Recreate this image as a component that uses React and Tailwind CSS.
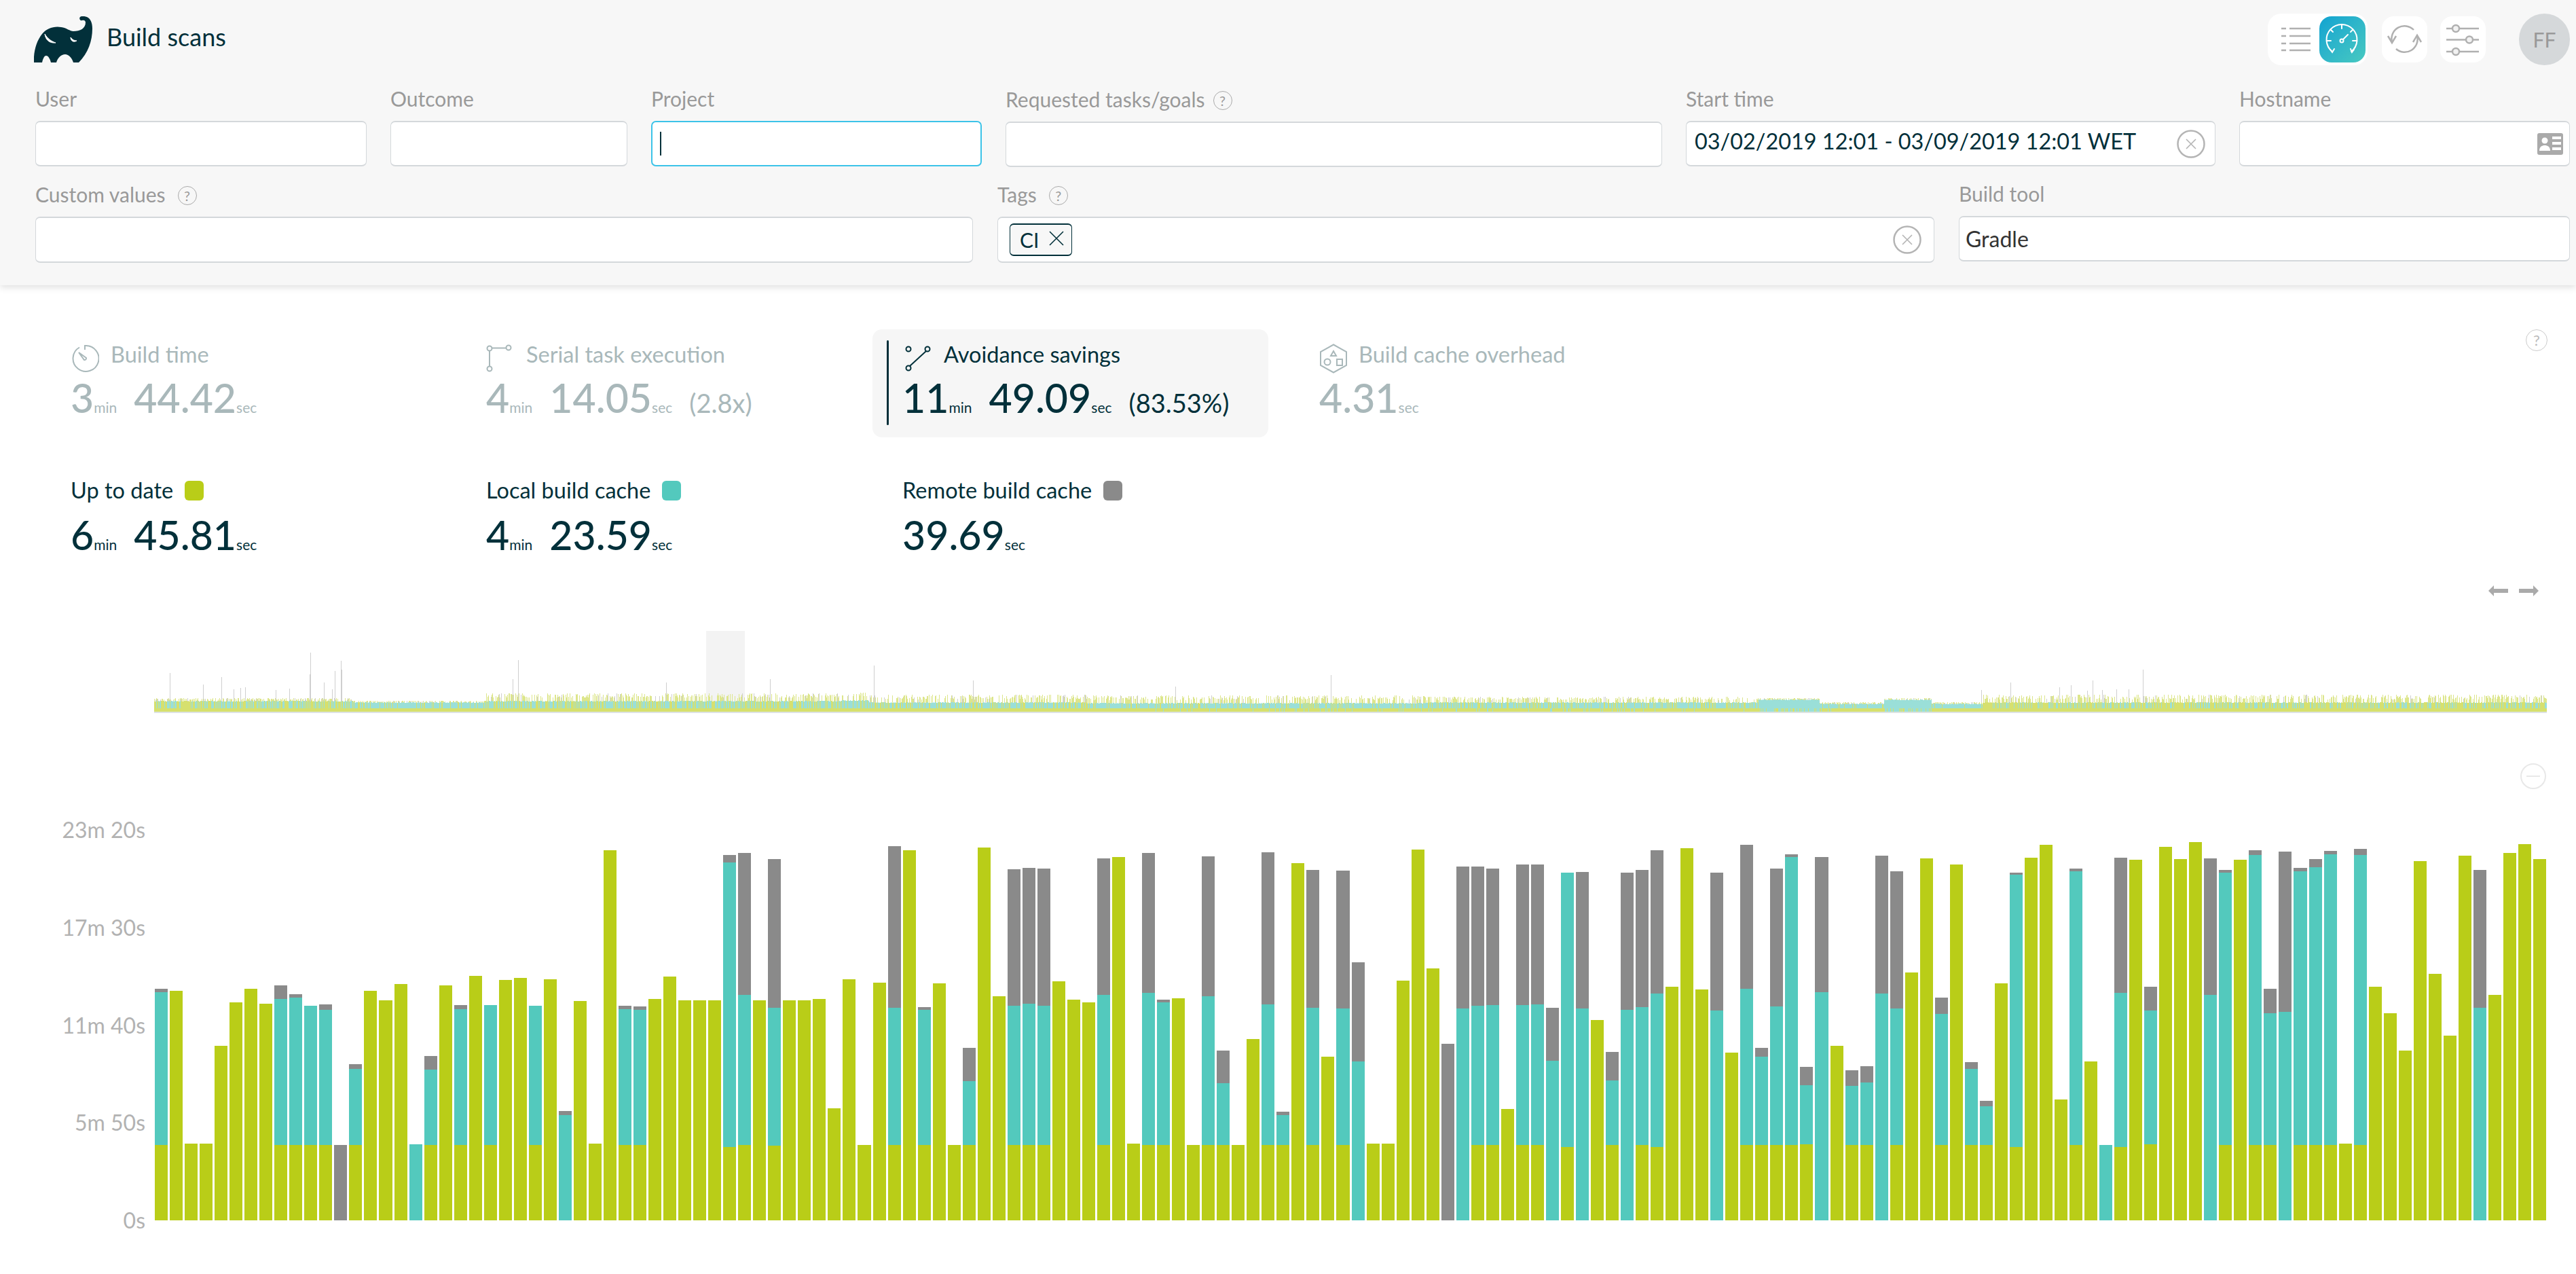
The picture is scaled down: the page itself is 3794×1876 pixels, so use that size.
import React from 'react';

const DARK = '#02303a';

// bar tops read off the chart: [green, teal, grey], 1391 is the baseline
const N = 1391;
const BARS = [
  [1141,633,622],[630],[1136],[1137],[812],[667],[622],[672],[1141,656,611],[1141,653,641],
  [1141,680],[1142,693,675],[N,N,1141],[1141,888,872],[630],[660],[608],[N,1139],[1141,891,846],[612],
  [1141,691,677],[581],[1141,677],[594],[587],[1141,678],[591],[N,1041,1029],[664],[1136],
  [162],[1141,691,679],[1141,692,681],[656],[583],[660],[661],[662],[1147,203,179],[1141,642,173],
  [662],[1143,685,192],[661],[662],[657],[1019],[591],[1141],[603],[1141,685,150],
  [163],[1142,693,684],[604],[1141],[1141,928,818],[153],[647],[1141,680,227],[1141,672,221],[1142,678,225],
  [599],[659],[667],[1141,642,190],[185],[1136],[1141,636,172],[1141,668,659],[654],[1141],
  [1141,647,184],[1141,935,828],[1141],[790],[1141,675,169],[1141,1041,1030],[205],[1141,685,229],[848],[1141,689,231],
  [N,863,534],[1136],[1136],[596],[161],[556],[N,N,806],[N,687,217],[1141,680,217],[1141,676,223],
  [1022],[1141,677,211],[1141,675,211],[N,862,685],[1147,238],[N,687,236],[727],[1141,926,833],[N,693,238],[1141,683,229],
  [1147,638,164],[617],[157],[626],[N,695,237],[834],[1141,622,144],[1140,849,818],[1141,682,223],[1142,186,176],
  [1139,942,882],[N,635,186],[811],[1140,944,892],[1140,934,879],[N,638,181],[1141,688,232],[568],[189],[1140,707,651],
  [210],[1140,888,866],[1140,1012,995],[605],[1147,244,237],[187],[144],[989],[1141,232,224],[864],
  [N,1140],[1147,636,188],[194],[1139,695,616],[151],[193],[135],[N,642,190],[1141,238,229],[195],
  [1141,179,164],[1140,704,622],[N,699,168],[1141,232,221],[1141,219,193],[1141,176,166],[1136],[1141,179,158],[616],[703],
  [828],[200],[573],[779],[180],[N,685,228],[642],[173],[142],[193],
];

const SPIKES = [
  [250,57],[299,40],[326,51],[344,33],[354,35],[361,36],[406,32],[426,34],[456,55],[457,87],[477,43],[489,33],[493,60],[502,75],[503,62],
  [755,48],[763,76],[981,43],[1134,48],[1287,68],[1433,46],[1731,37],[1960,54],[2918,32],[2961,43],[3033,36],[3050,39],[3074,31],[3082,46],[3096,32],[3117,33],[3135,33],[3156,62],
];

function bandAt(x) {
  if (x < 520) return { band: 16, spike: 20, tealBias: 0.45 };
  if (x < 715) return { band: 14, spike: 16, tealBias: 0.8 };
  if (x < 1240) return { band: 16, spike: 27, tealBias: 0.6 };
  if (x < 1280) return { band: 17, spike: 28, tealBias: 0.7 };
  if (x < 1600) return { band: 14, spike: 25, tealBias: 0.65 };
  if (x < 2100) return { band: 13, spike: 24, tealBias: 0.75 };
  if (x < 2590) return { band: 14, spike: 22, tealBias: 0.7 };
  if (x < 2680) return { band: 18, spike: 20, tealBias: 1 };
  if (x < 2775) return { band: 12, spike: 14, tealBias: 0.9 };
  if (x < 2845) return { band: 18, spike: 20, tealBias: 1 };
  if (x < 2920) return { band: 12, spike: 14, tealBias: 0.9 };
  return { band: 14, spike: 25, tealBias: 0.35 };
}

function buildMinimap() {
  let seed = 42;
  const rnd = () => {
    seed = (seed * 16807) % 2147483647;
    return seed / 2147483647;
  };
  const paths = { green: '', teal: '', grey: '', pale: '' };
  const H = 119;
  for (let x = 227; x < 3751; x++) {
    const { band, spike, tealBias } = bandAt(x);
    const px = x - 227 + 0.5;
    const baseTeal = (rnd() < 0.07 && x > 1700 && x < 2700) || (x > 2590 && x < 2680 && rnd() < 0.7) || (x > 2775 && x < 2845 && rnd() < 0.7);
    if (baseTeal) paths.teal += `M${px} ${H}V${H - 5}`;
    else paths.green += `M${px} ${H}V${H - 5}`;
    const top = H - band + Math.floor(rnd() * 2);
    if (rnd() < tealBias) paths.teal += `M${px} ${H - 5}V${top}`;
    else paths.green += `M${px} ${H - 5}V${top}`;
    const r = rnd();
    const tip = H - band - Math.floor((0.4 + rnd() * 0.6) * (spike - band + 1));
    if (r < 0.45) paths.pale += `M${px} ${top}V${tip}`;
    else if (r < 0.5) paths.grey += `M${px} ${top}V${tip}`;
  }
  SPIKES.forEach(([x, h]) => {
    paths.grey += `M${x - 227 + 0.5} ${H - 14}V${H - h}`;
  });
  return paths;
}

const MINIMAP = buildMinimap();

function Minimap() {
  return (
    <svg width="3524" height="121" viewBox="0 0 3524 121" className="block" shapeRendering="crispEdges">
      <rect x="813" y="0" width="57" height="119" fill="#f3f3f3" />
      <path d={MINIMAP.pale} stroke="#dde68c" strokeWidth="1" />
      <path d={MINIMAP.grey} stroke="#cfcfcf" strokeWidth="1" />
      <path d={MINIMAP.green} stroke="#d6e06e" strokeWidth="1" />
      <path d={MINIMAP.teal} stroke="#9adfd8" strokeWidth="1" />
      <rect x="0" y="119" width="3524" height="2" fill="#dde3e3" />
    </svg>
  );
}

function Bar({ data }) {
  const g = data[0];
  const t = data[1] ?? g;
  const k = data[2] ?? t;
  const px = v => `${v / 2.253}px`;
  return (
    <div className="flex-1 min-w-0 flex flex-col justify-end">
      <div className="bg-[#8a8a8a]" style={{ height: px(t - k) }} />
      <div className="bg-[#53c9bd]" style={{ height: px(g - t) }} />
      <div className="bg-[#b9cd18]" style={{ height: px(N - g) }} />
    </div>
  );
}

function Help() {
  return (
    <span className="inline-flex items-center justify-center w-[28px] h-[28px] rounded-full border-[1.5px] border-[#aaaaaa] text-[#999999] text-[20px] leading-none">?</span>
  );
}

function Field({ label, help, gapClass = 'gap-[18px]', children, className = 'border-x border-y-2 border-[#d4d8db]', boxClass = '' }) {
  return (
    <div>
      <div className={`h-[51px] flex items-start ${gapClass}`}>
        <span className="text-[30px] leading-[40px] text-[#999999] -translate-y-[2px]">{label}</span>
        {help && <span className="mt-[6px]"><Help /></span>}
      </div>
      <div className={`h-[67px] bg-white rounded-[7px] flex items-center ${className} ${boxClass}`}>{children}</div>
    </div>
  );
}

function ClearIcon() {
  return (
    <svg width="42" height="42" viewBox="0 0 42 42" fill="none" stroke="#b4b4b4" className="block">
      <circle cx="21" cy="21" r="19.5" strokeWidth="2.5" />
      <path d="M14 14L28 28M28 14L14 28" strokeWidth="1.6" />
    </svg>
  );
}

function Dur({ min, sec, extra, muted }) {
  const color = muted ? 'text-[#a9b8ba]' : 'text-[#02303a]';
  return (
    <div className={`flex items-baseline leading-none ${color}`}>
      {min && <span className="text-[59px] leading-[60px] font-medium">{min}</span>}
      {min && <span className="text-[21px] mr-[25px]">min</span>}
      <span className="text-[59px] leading-[60px] font-medium">{sec}</span>
      <span className="text-[21px]">sec</span>
      {extra && <span className="text-[38px] ml-[25px]">{extra}</span>}
    </div>
  );
}

function Stopwatch() {
  return (
    <svg width="42" height="42" viewBox="0 0 42 42" fill="none" stroke="#a9b8ba" strokeWidth="2">
      <path d="M13 4.5A19 19 0 1 0 21 2V8" />
      <path d="M12 12L20 23A2.5 2.5 0 0 0 23 20Z" />
    </svg>
  );
}

function SerialIcon() {
  return (
    <svg width="38" height="42" viewBox="0 0 38 42" fill="none" stroke="#a9b8ba" strokeWidth="2">
      <circle cx="5" cy="6" r="3.5" />
      <circle cx="33" cy="5" r="3.5" />
      <circle cx="5" cy="36" r="3.5" />
      <path d="M8.5 5.5H29.5M5 9.5V32.5" />
    </svg>
  );
}

function AvoidanceIcon() {
  return (
    <svg width="38" height="38" viewBox="0 0 38 38" fill="none" stroke={DARK} strokeWidth="2">
      <circle cx="5" cy="5" r="3.5" />
      <circle cx="33" cy="5" r="3.5" />
      <circle cx="5" cy="33" r="3.5" />
      <path d="M7 30L31 8" />
    </svg>
  );
}

function CacheIcon() {
  return (
    <svg width="42" height="44" viewBox="0 0 42 44" fill="none" stroke="#a9b8ba" strokeWidth="2">
      <path d="M21 1.5L40 12V32L21 42.5L2 32V12Z" />
      <path d="M21 11L25 18H17Z" />
      <circle cx="12" cy="27" r="4.5" />
      <rect x="26" y="23" width="8" height="9" />
    </svg>
  );
}

function Elephant() {
  return (
    <svg width="87" height="68" viewBox="50 24 87 68">
      <path
        fill={DARK}
        d="M50 92C49 76 54 60 62 50C68 42 80 38 90 40C98 41 103 46 108 46C118 46 126 42 126 33C126 30 123 29 121 30C118 31 116 27 118 25C121 23 125 24 128 25C133 27 136 33 136 42C136 60 130 78 116 92H108C106 85 101 80 96 80C90 80 85 85 83 92H75C74 87 71 82 68 82C65 82 63 87 62 92Z"
      />
      <path d="M66 50C67 58 72 64 82 63C76 61 70 57 66 50ZM104 55C104 60 108 63 113 60C109 60 106 58 104 55Z" fill="white" stroke="white" strokeWidth="1" />
    </svg>
  );
}

function ListIcon() {
  return (
    <svg width="72" height="68" viewBox="0 0 72 68" stroke="#b0b0b0" strokeWidth="2.5">
      <path d="M16 18H23M28 18H59M16 29H23M28 29H59M16 40H23M28 40H59M16 50H23M28 50H59" />
    </svg>
  );
}

function GaugeIcon() {
  return (
    <svg width="68" height="68" viewBox="0 0 68 68" fill="none" stroke="white" strokeWidth="2" strokeLinecap="round">
      <path d="M19 52A22.5 22.5 0 1 1 47 52" />
      <path d="M16 49L19 53L22 48M46 48L48 53L51 49" />
      <path d="M33 13V18M17 20L20 23M49 20L46 23M11 36H17M49 36H55" />
      <circle cx="33" cy="36" r="2.5" />
      <path d="M35 34L42 27" />
    </svg>
  );
}

function SyncIcon() {
  return (
    <svg width="67" height="68" viewBox="0 0 67 68" fill="none" stroke="#b0b0b0" strokeWidth="2.5">
      <path d="M15 38A19 19 0 0 1 47 20" />
      <path d="M9 29L15 39L21 29" />
      <path d="M52 29A19 19 0 0 1 21 48" />
      <path d="M46 38L52 28L58 38" />
    </svg>
  );
}

function SlidersIcon() {
  return (
    <svg width="67" height="68" viewBox="0 0 67 68" fill="none" stroke="#b0b0b0" strokeWidth="2.5">
      <path d="M9 18H57M9 34.5H57M9 52H57" />
      <circle cx="23" cy="18" r="5" fill="#f2f2f2" />
      <circle cx="43" cy="34.5" r="5" fill="#f2f2f2" />
      <circle cx="23" cy="52" r="5" fill="#f2f2f2" />
    </svg>
  );
}

function Header() {
  return (
    <header className="relative z-10 bg-[#f7f7f7] shadow-[0_3px_10px_rgba(0,0,0,0.13)] pt-[20px] pb-[33px] pl-[52px] pr-[9px]">
      <div className="h-[76px] flex items-center">
        <div className="-ml-[2px]"><Elephant /></div>
        <span className="ml-[20px] text-[36px] text-[#02303a] -translate-y-[4px]">Build scans</span>
        <div className="ml-auto flex items-center">
          <div className="flex items-center h-[76px] bg-white rounded-[20px] pl-[4px] pr-[3px]">
            <ListIcon />
            <div className="w-[68px] h-[68px] rounded-[18px] bg-linear-to-br from-[#0fa3d1] to-[#47c9c0]"><GaugeIcon /></div>
          </div>
          <div className="ml-[21px] w-[67px] h-[68px] bg-white rounded-[18px]"><SyncIcon /></div>
          <div className="ml-[19px] w-[67px] h-[68px] bg-white rounded-[18px]"><SlidersIcon /></div>
          <div className="ml-[49px] w-[75px] h-[76px] rounded-full bg-[#d5d8da] flex items-center justify-center text-[30px] text-[#999999]">FF</div>
        </div>
      </div>

      <div className="mt-[31px] grid grid-cols-[488px_349px_487px_967px_780px_487px] gap-x-[35px]">
        <Field label="User" />
        <Field label="Outcome" />
        <Field label="Project" className="border-2 border-[#3cc3e8]">
          <div className="ml-[11px] w-[2px] h-[35px] bg-[#02303a]" />
        </Field>
        <div className="translate-y-px"><Field label="Requested tasks/goals" help gapClass="gap-[12px]" /></div>
        <Field label="Start time">
          <span className="ml-[12px] text-[32.4px] text-[#02303a] -translate-y-[3px]">03/02/2019 12:01 - 03/09/2019 12:01 WET</span>
          <span className="ml-auto mr-[14px]"><ClearIcon /></span>
        </Field>
        <Field label="Hostname">
          <svg width="38" height="32" viewBox="0 0 38 32" className="ml-auto mr-[9px]">
            <rect width="38" height="32" rx="3" fill="#aaaaaa" />
            <circle cx="11" cy="11" r="4.5" fill="white" />
            <path d="M3 26C3 20 7 18 11 18C15 18 19 20 19 26Z" fill="white" />
            <path d="M22 7H35M22 15H35M22 23H35" stroke="white" strokeWidth="4" />
          </svg>
        </Field>
      </div>

      <div className="mt-[23px] grid grid-cols-[1381px_1380px_900px] gap-x-[36px]">
        <Field label="Custom values" help boxClass="!h-[68px]" />
        <Field label="Tags" help boxClass="!h-[68px]">
          <div className="ml-[17px] w-[92px] h-[48px] rounded-[6px] border-x border-y-2 border-[#02303a] bg-[#f7f7f7] flex items-center pl-[14px] text-[#02303a]">
            <span className="text-[30px]">CI</span>
            <svg width="24" height="24" viewBox="0 0 24 24" className="ml-[14px] -translate-y-[2px]" stroke="#02303a" strokeWidth="1.6">
              <path d="M2 2L22 22M22 2L2 22" />
            </svg>
          </div>
          <span className="ml-auto mr-[18px]"><ClearIcon /></span>
        </Field>
        <div className="-translate-y-px">
          <Field label="Build tool">
            <span className="ml-[9px] text-[32px] text-[#333333]">Gradle</span>
          </Field>
        </div>
      </div>
    </header>
  );
}

function StatLabel({ icon, label, gap, muted }) {
  return (
    <div className="flex items-center h-[44px]">
      {icon}
      <span className={`text-[32.5px] leading-[40px] -translate-y-[6px] ${muted ? 'text-[#a9b8ba]' : 'text-[#02303a]'}`} style={{ marginLeft: gap }}>{label}</span>
    </div>
  );
}

function Stats() {
  return (
    <section className="pt-[65px] pl-[104px] pr-[40px] h-[440px]">
      <div className="grid grid-cols-[612px_613px_614px_1fr_34px]">
        <div className="pt-[21px]">
          <StatLabel icon={<Stopwatch />} label="Build time" gap={17} muted />
          <div className="mt-[6px]"><Dur min="3" sec="44.42" muted /></div>
        </div>
        <div className="pt-[21px]">
          <StatLabel icon={<SerialIcon />} label="Serial task execution" gap={21} muted />
          <div className="mt-[6px]"><Dur min="4" sec="14.05" extra="(2.8x)" muted /></div>
        </div>
        <div className="-ml-[44px] w-[583px] h-[159px] bg-[#f6f6f6] rounded-[14px] flex pt-[16px] pl-[21px]">
          <div className="w-[3px] h-[125px] rounded-full bg-[#02303a]" />
          <div className="ml-[20px] pt-[5px]">
            <StatLabel icon={<span className="ml-[4px]"><AvoidanceIcon /></span>} label="Avoidance savings" gap={19} />
            <div className="mt-[6px]"><Dur min="11" sec="49.09" extra="(83.53%)" /></div>
          </div>
        </div>
        <div className="pt-[21px]">
          <StatLabel icon={<CacheIcon />} label="Build cache overhead" gap={16} muted />
          <div className="mt-[6px]"><Dur sec="4.31" muted /></div>
        </div>
        <div>
          <span className="inline-flex items-center justify-center w-[32px] h-[32px] rounded-full border-[1.5px] border-[#cccccc] text-[#bbbbbb] text-[22px] leading-none">?</span>
        </div>
      </div>

      <div className="mt-[58px] grid grid-cols-[612px_613px_614px]">
        {[
          ['Up to date', 'bg-[#b9cd18]', '6', '45.81'],
          ['Local build cache', 'bg-[#53c9bd]', '4', '23.59'],
          ['Remote build cache', 'bg-[#8a8a8a]', null, '39.69'],
        ].map(([label, swatch, min, sec]) => (
          <div key={label}>
            <div className="flex items-center h-[40px]">
              <span className="text-[32.5px] text-[#02303a]">{label}</span>
              <span className={`ml-[17px] w-[28px] h-[29px] rounded-[6px] ${swatch}`} />
            </div>
            <div className="mt-[16px]"><Dur min={min} sec={sec} /></div>
          </div>
        ))}
      </div>
    </section>
  );
}

function Arrows() {
  return (
    <div className="h-[20px] flex justify-end items-center gap-[16px] pr-[55px]">
      <svg width="29" height="16" viewBox="0 0 29 16" fill="#aaaaaa"><path d="M0 8L8 0V5H29V11H8V16Z" /></svg>
      <svg width="29" height="16" viewBox="0 0 29 16" fill="#aaaaaa"><path d="M29 8L21 0V5H0V11H21V16Z" /></svg>
    </div>
  );
}

function Chart() {
  const labels = ['23m 20s', '17m 30s', '11m 40s', '5m 50s', '0s'];
  return (
    <div className="flex">
      <div className="w-[214px] -my-[20px] flex flex-col justify-between items-end text-[32px] leading-[40px] text-[#b2b2b2]">
        {labels.map(l => <span key={l}>{l}</span>)}
      </div>
      <div className="ml-[14px] w-[3523px] h-[575px] flex items-stretch gap-[3px]">
        {BARS.map((b, i) => <Bar key={i} data={b} />)}
      </div>
    </div>
  );
}

export default function App() {
  return (
    <div className="w-[3794px] h-[1876px] overflow-hidden bg-white [font-family:Lato,sans-serif]">
      <Header />
      <Stats />
      <Arrows />
      <div className="mt-[49px] pl-[227px]"><Minimap /></div>
      <div className="mt-[74px] h-[38px] flex justify-end pr-[44px]">
        <span className="w-[38px] h-[38px] rounded-full border-2 border-[#e8e8e8] flex items-center justify-center">
          <span className="w-[20px] h-[2px] bg-[#e8e8e8]" />
        </span>
      </div>
      <div className="mt-[60px]"><Chart /></div>
    </div>
  );
}
